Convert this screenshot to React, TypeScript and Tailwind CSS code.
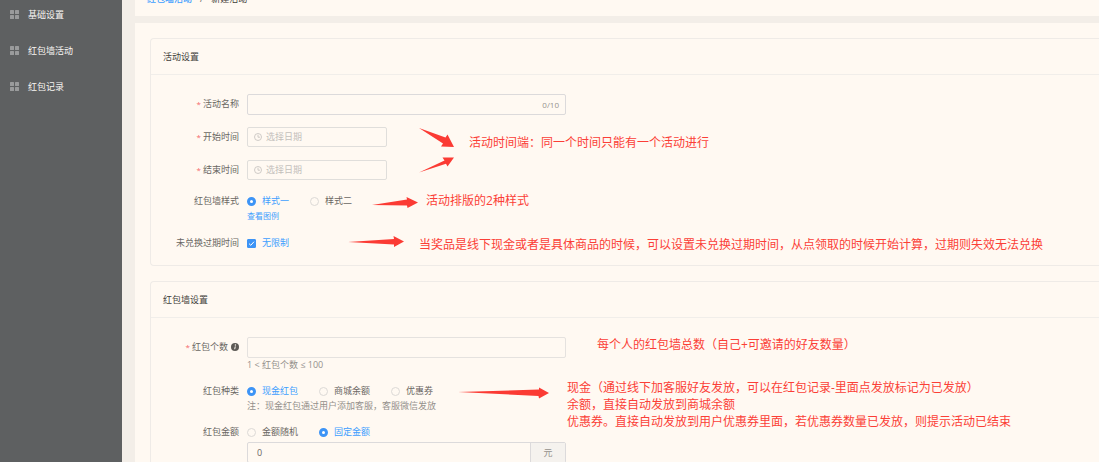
import { useState } from "react";
import type { ReactNode } from "react";

const menuItems = ["基础设置", "红包墙活动", "红包记录"];

const GridIcon = () => (
  <svg width="10" height="10" viewBox="0 0 10 10" fill="#9a9b9c">
    <rect x="0" y="0" width="4" height="4" rx="0.5" />
    <rect x="5" y="0" width="4" height="4" rx="0.5" />
    <rect x="0" y="5" width="4" height="4" rx="0.5" />
    <rect x="5" y="5" width="4" height="4" rx="0.5" />
  </svg>
);

const ClockIcon = () => (
  <svg
    width="8"
    height="8"
    viewBox="0 0 8 8"
    fill="none"
    stroke="#c3c0bc"
    strokeWidth="0.8"
    className="shrink-0"
  >
    <circle cx="4" cy="4" r="3.5" />
    <path d="M4 1.8V4.2H6" />
  </svg>
);

const InfoIcon = () => (
  <svg width="8" height="8" viewBox="0 0 8 8" className="ml-[3px] shrink-0">
    <circle cx="4" cy="4" r="4" fill="#5d5a56" />
    <circle cx="4.4" cy="2" r="0.7" fill="#fff9f2" />
    <path d="M4.3 3.4L3.7 6.2" stroke="#fff9f2" strokeWidth="1" />
  </svg>
);

const Card = ({ title, children }: { title: string; children: ReactNode }) => (
  <section className="border border-r-0 border-[#efebe7] rounded-l-sm">
    <h2 className="h-9 px-3 leading-9 text-[#413e3a] border-b border-[#f1eeea]">
      {title}
    </h2>
    {children}
  </section>
);

type IFormRow = {
  label: string;
  htmlFor?: string;
  required?: boolean;
  info?: boolean;
  tall?: boolean;
  children: ReactNode;
};

const FormRow = ({
  label,
  htmlFor,
  required,
  info,
  tall,
  children,
}: IFormRow) => (
  <div className="flex items-start gap-2">
    <label
      htmlFor={htmlFor}
      className={`flex items-center justify-end w-[88px] shrink-0 ${
        tall ? "h-5" : "h-4"
      }`}
    >
      {required && <span className="mr-0.5 text-[8px] text-[#f56c6c]">*</span>}
      {label}
      {info && <InfoIcon />}
    </label>
    {children}
  </div>
);

const DateField = ({ id }: { id: string }) => (
  <div className="flex items-center w-[140px] h-5 px-1.5 gap-1 border border-[#e0dedb] rounded-xs">
    <ClockIcon />
    <input
      id={id}
      type="text"
      placeholder="选择日期"
      className="w-full min-w-0 bg-transparent outline-none placeholder:text-[#c3c0bc]"
    />
  </div>
);

type IRadioGroup = {
  name: string;
  options: string[];
  value: string;
  onChange: (value: string) => void;
};

const RadioGroup = ({ name, options, value, onChange }: IRadioGroup) => (
  <div className="flex h-4 gap-[21px]">
    {options.map((option) => (
      <label
        key={option}
        className={`flex items-center gap-1.5 whitespace-nowrap ${
          value === option ? "text-[#409eff]" : ""
        }`}
      >
        <input
          type="radio"
          name={name}
          value={option}
          checked={value === option}
          onChange={() => onChange(option)}
          className="w-[9px] h-[9px] border border-[#dcd9d6] rounded-full appearance-none checked:border-[3px] checked:border-[#3d94f6] checked:bg-white"
        />
        {option}
      </label>
    ))}
  </div>
);

const Note = ({ children }: { children: ReactNode }) => (
  <p className="text-xs text-[#fb3f37] whitespace-nowrap">{children}</p>
);

const App = () => {
  const [activityName, setActivityName] = useState("");
  const [wallStyle, setWallStyle] = useState("样式一");
  const [unlimited, setUnlimited] = useState(true);
  const [kind, setKind] = useState("现金红包");
  const [amountType, setAmountType] = useState("固定金额");

  return (
    <div className="flex h-screen overflow-hidden bg-[#f3eee8] text-[9px] leading-4 text-[#6a6763] font-['Open_Sans','Noto_Sans_CJK_SC',sans-serif]">
      <nav className="w-[122px] shrink-0 bg-[#5e6061]">
        <ul className="-mt-[3px]">
          {menuItems.map((item) => (
            <li key={item}>
              <a
                href="#"
                className="flex items-center h-9 gap-2 pl-2.5 text-[#f8f6f3]"
              >
                <GridIcon />
                {item}
              </a>
            </li>
          ))}
        </ul>
      </nav>

      <main className="flex-1 min-w-0 ml-[13px]">
        <div className="h-4 px-3 overflow-hidden bg-[#fff9f2]">
          <div className="flex -mt-[9px] gap-2">
            <a href="#" className="font-medium text-[#409eff]">
              红包墙活动
            </a>
            <span>/</span>
            <span className="text-[#413e3a]">新建活动</span>
          </div>
        </div>

        <div className="flex flex-col gap-[15px] mt-[7px] pt-[15px] pl-[15px] pb-4 bg-[#fff9f2]">
          <Card title="活动设置">
            <form className="flex flex-col gap-3 pt-[19px] pb-3.5">
              <FormRow label="活动名称" htmlFor="activityName" required tall>
                <div className="flex items-center w-[319px] h-[21px] px-1.5 border border-[#dcdadb] rounded-xs">
                  <input
                    id="activityName"
                    type="text"
                    maxLength={10}
                    value={activityName}
                    onChange={(e) => setActivityName(e.target.value)}
                    className="w-full min-w-0 bg-transparent outline-none"
                  />
                  <span className="text-[8px] text-[#96928e]">
                    {activityName.length}/10
                  </span>
                </div>
              </FormRow>

              <div className="flex items-start">
                <div className="flex flex-col gap-[13px]">
                  <FormRow label="开始时间" htmlFor="startTime" required tall>
                    <DateField id="startTime" />
                  </FormRow>
                  <FormRow label="结束时间" htmlFor="endTime" required tall>
                    <DateField id="endTime" />
                  </FormRow>
                </div>
                <svg
                  width="35"
                  height="54"
                  viewBox="0 0 35 54"
                  fill="#fb3b34"
                  className="ml-8 mr-[15px] shrink-0"
                >
                  <path d="M0 1L26.5 10.5L28.5 7.5L35 20L22 19.5L24 16.5Z" />
                  <path d="M0 45.5L25.5 33.5L23.5 30.5L35 30.5L28.5 39.5L27 36.8Z" />
                </svg>
                <p className="text-xs leading-8 text-[#fb3f37] whitespace-nowrap">
                  活动时间端：同一个时间只能有一个活动进行
                </p>
              </div>

              <FormRow label="红包墙样式">
                <div>
                  <RadioGroup
                    name="wallStyle"
                    options={["样式一", "样式二"]}
                    value={wallStyle}
                    onChange={setWallStyle}
                  />
                  <a
                    href="#"
                    className="block text-[8px] leading-[14px] text-[#409eff]"
                  >
                    查看图例
                  </a>
                </div>
                <div className="flex items-center h-4 gap-2 ml-3">
                  <svg width="46" height="16" viewBox="0 0 46 16" fill="#fb3b34">
                    <path d="M0 12L35 6.5L34.5 4L46 9.5L35.5 15L35 12.5Z" />
                  </svg>
                  <Note>活动排版的2种样式</Note>
                </div>
              </FormRow>

              <FormRow label="未兑换过期时间">
                <label
                  className={`flex items-center h-4 gap-1.5 whitespace-nowrap ${
                    unlimited ? "text-[#409eff]" : ""
                  }`}
                >
                  <span className="relative flex">
                    <input
                      type="checkbox"
                      checked={unlimited}
                      onChange={(e) => setUnlimited(e.target.checked)}
                      className="w-[9px] h-[9px] border border-[#dcd9d6] rounded-[1px] appearance-none checked:border-[#3d94f6] checked:bg-[#3d94f6]"
                    />
                    {unlimited && (
                      <svg
                        viewBox="0 0 9 9"
                        fill="none"
                        stroke="#fff"
                        strokeWidth="1"
                        className="absolute inset-0 pointer-events-none"
                      >
                        <path d="M2 4.6L3.8 6.3L7 2.7" />
                      </svg>
                    )}
                  </span>
                  无限制
                </label>
                <div className="flex items-start h-4 gap-[15px] ml-[51px]">
                  <svg width="56" height="16" viewBox="0 0 56 16" fill="#fb3b34">
                    <path d="M0 7L46 4L45.5 1L56 6.5L46 12L46 9.5Z" />
                  </svg>
                  <p className="text-xs leading-5 text-[#fb3f37] whitespace-nowrap">
                    当奖品是线下现金或者是具体商品的时候，可以设置未兑换过期时间，从点领取的时候开始计算，过期则失效无法兑换
                  </p>
                </div>
              </FormRow>
            </form>
          </Card>

          <Card title="红包墙设置">
            <form className="flex flex-col gap-[11px] pt-[19px] pb-4">
              <FormRow label="红包个数" htmlFor="packetCount" required info tall>
                <div className="w-[319px] shrink-0">
                  <input
                    id="packetCount"
                    type="text"
                    className="block w-full h-[21px] px-2 border border-[#e5e2df] rounded-xs outline-none"
                  />
                  <p className="leading-[14px] text-[#94908b]">
                    1 &lt; 红包个数 ≤ 100
                  </p>
                </div>
                <div className="ml-[23px]">
                  <Note>每个人的红包墙总数（自己+可邀请的好友数量）</Note>
                </div>
              </FormRow>

              <div className="flex items-start">
                <div className="flex flex-col gap-[11px] w-[415px] shrink-0">
                  <FormRow label="红包种类">
                    <div>
                      <RadioGroup
                        name="kind"
                        options={["现金红包", "商城余额", "优惠券"]}
                        value={kind}
                        onChange={setKind}
                      />
                      <p className="leading-[14px] text-[#94908b] whitespace-nowrap">
                        注：现金红包通过用户添加客服，客服微信发放
                      </p>
                    </div>
                    <svg
                      width="91"
                      height="16"
                      viewBox="0 0 91 16"
                      fill="#fb3b34"
                      className="ml-3.5 shrink-0"
                    >
                      <path d="M0 9L81 6.5L81 4.5L91 10L81 15.5L80.5 13Z" />
                    </svg>
                  </FormRow>

                  <FormRow label="红包金额">
                    <div className="flex-1">
                      <RadioGroup
                        name="amountType"
                        options={["金额随机", "固定金额"]}
                        value={amountType}
                        onChange={setAmountType}
                      />
                      <div className="flex h-[21px] mt-0.5 border border-[#dcdadb] rounded-xs">
                        <input
                          type="text"
                          aria-label="红包金额"
                          defaultValue="0"
                          className="flex-1 min-w-0 px-[9px] bg-transparent outline-none"
                        />
                        <span className="w-[35px] leading-[19px] text-center text-[#94908b] bg-[#f5f2ee] border-l border-[#dcdadb]">
                          元
                        </span>
                      </div>
                    </div>
                  </FormRow>
                </div>
                <div className="-mt-1 ml-px text-xs leading-[17px] text-[#fb3f37] whitespace-nowrap">
                  <p>现金（通过线下加客服好友发放，可以在红包记录-里面点发放标记为已发放）</p>
                  <p>余额，直接自动发放到商城余额</p>
                  <p>优惠券。直接自动发放到用户优惠券里面，若优惠券数量已发放，则提示活动已结束</p>
                </div>
              </div>
            </form>
          </Card>
        </div>
      </main>
    </div>
  );
};

export default App;
